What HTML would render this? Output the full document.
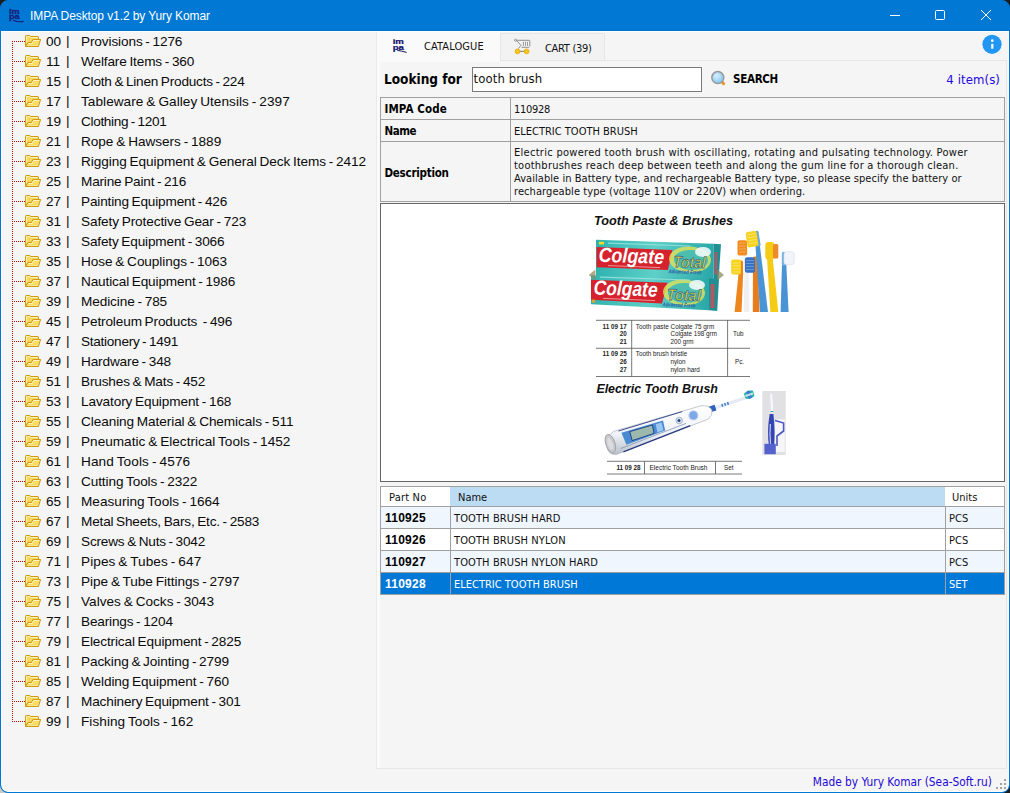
<!DOCTYPE html>
<html><head><meta charset="utf-8"><title>IMPA Desktop</title>
<style>
html,body{margin:0;padding:0;}
body{width:1010px;height:793px;overflow:hidden;background:#1c1c1c;font-family:"Liberation Sans",sans-serif;}
#win{position:absolute;left:0;top:0;width:1008px;height:791px;border:1px solid #0078d4;border-radius:8px;background:#0078d4;overflow:hidden;}
#content{position:absolute;left:0;top:30px;width:1008px;height:761px;background:#f5f5f5;border-radius:0 0 7px 7px;border-top:1px solid #fff;border-bottom:1px solid #fff;border-right:1px solid #fff;box-sizing:border-box;}
#title{position:absolute;left:-1px;top:-1px;width:1010px;height:31px;background:#0078d4;color:#fff;}
#title .t{position:absolute;left:30px;top:8px;font-size:12px;line-height:16px;white-space:nowrap;letter-spacing:-0.1px;}
.abs{position:absolute;}
#left{position:absolute;left:0;top:30px;width:375px;height:740px;border-left:1px solid #fff;border-top:1px solid #fff;}
.tr{position:absolute;left:-2px;height:20px;width:376px;white-space:nowrap;font-size:13.6px;line-height:20px;color:#0a0a0a;}
.tr .tb{position:absolute;left:66px;top:0px;}
.tr .fo{position:absolute;left:25px;top:4px;}
.tr .tc{position:absolute;left:46px;top:1px;}
.tr .tn{position:absolute;left:81px;top:1px;word-spacing:-0.9px;}
.tr:before{content:"";position:absolute;left:12px;top:10px;width:13px;height:1px;background:repeating-linear-gradient(90deg,#c80000 0 1px,transparent 1px 2px);}
#vline{position:absolute;left:10px;top:9px;width:1px;height:681px;background:repeating-linear-gradient(180deg,#c80000 0 1px,transparent 1px 2px);}
.dv{font-family:"DejaVu Sans Condensed","DejaVu Sans","Liberation Sans",sans-serif;}

#split{position:absolute;left:375px;top:31px;width:3px;height:737px;background:#fafafa;border-left:1px solid #ebebeb;}
#tabcart{left:499px;top:32px;width:103px;height:26px;background:#f2f2f2;border:1px solid #e6e6e6;border-bottom:none;}
#tabact{left:379px;top:31px;width:120px;height:30px;background:#fafafa;}
#tabpage{left:499px;top:59px;width:507px;height:1px;background:#e6e6e6;}
#det{left:379px;top:96px;width:623px;height:103px;border:1px solid #a0a0a0;}
.lb{left:3.5px;font-size:11.5px;line-height:16px;font-weight:bold;color:#000;letter-spacing:-0.25px;white-space:nowrap;}
.vl{left:133px;font-size:11px;line-height:16px;color:#111;white-space:nowrap;}
#pic{left:379px;top:202px;width:623px;height:277px;overflow:hidden;border:1px solid #666;background:#fff;}
#grid{left:380px;top:486px;width:623px;height:107px;border-left:1px solid #a0a0a0;border-top:1px solid #a0a0a0;border-right:1px solid #a0a0a0;border-bottom:1px solid #a0a0a0;margin:-1px 0 0 -1px;}
.hl{left:0;width:623px;height:1px;background:#a0a0a0;}
.gh{top:4px;font-size:11px;line-height:14px;color:#111;white-space:nowrap;}
.pn{left:4px;letter-spacing:0.25px;font-family:"Liberation Sans",sans-serif;font-weight:bold;font-size:12px;line-height:15px;color:#000;}
.gn{left:73px;font-size:11px;line-height:14px;color:#111;white-space:nowrap;}
.gu{left:568px;font-size:11px;line-height:14px;color:#111;}
</style></head><body>
<div style="position:absolute;left:0;top:783px;width:10px;height:10px;background:#c8c8c8"></div>
<div id="win">
 <div id="title">
  <svg class="abs" style="left:0;top:0" width="32" height="31" viewBox="0 0 32 31"><g font-family="Liberation Sans, sans-serif" font-weight="bold" font-size="6.8" fill="#16207a" stroke="#16207a" stroke-width="0.25"><text transform="translate(9,13.7) scale(1.35,1)">im</text><text transform="translate(9,18.6) scale(1.35,1)">pa</text></g><path d="M13 20.2Q17.5 22.4 23.5 21.4" stroke="#16207a" stroke-width="1.1" fill="none"/></svg>
  <div class="t">IMPA Desktop v1.2 by Yury Komar</div>
  <svg class="abs" style="left:888px;top:9px" width="14" height="12"><path d="M2 6.5H12" stroke="#fff" stroke-width="1"/></svg>
  <svg class="abs" style="left:934px;top:9px" width="12" height="12"><rect x="1.5" y="1.5" width="9" height="9" rx="1" fill="none" stroke="#fff" stroke-width="1"/></svg>
  <svg class="abs" style="left:980px;top:9px" width="12" height="12"><path d="M1 1L11 11M11 1L1 11" stroke="#fff" stroke-width="1"/></svg>
 </div>
 <div id="content"></div>
 <div id="left">
  <div id="vline"></div>
<div class="tr" style="top:-1px"><svg class="fo" width="17" height="13" viewBox="0 0 17 13"><path d="M0.5 11.5V1.2Q0.5 0.5 1.2 0.5H4.8L5.6 1.5H12.8Q13.5 1.5 13.5 2.2V4.5H8L6.5 7.5H3Z" fill="#f8d95e" stroke="#cf9a14" stroke-linejoin="round"/><path d="M1.5 8V1.5H4.5L5.3 2.5H12.5" fill="none" stroke="#fdf0b0" stroke-width="1"/><path d="M0.7 11.5L3 7.5H6.5L8 4.5H15.6L13.4 11.5Z" fill="#f9dc62" stroke="#cf9a14" stroke-linejoin="round"/><path d="M3.6 8.5H7.1L8.6 5.5H14.3" fill="none" stroke="#fff3bd" stroke-width="1"/><path d="M2.4 10.5H12.8" stroke="#fbe48a" stroke-width="1"/></svg><span class="tc">00</span><span class="tb">|</span><span class="tn" style="letter-spacing:-0.114px">Provisions - 1276</span></div>
<div class="tr" style="top:19px"><svg class="fo" width="17" height="13" viewBox="0 0 17 13"><path d="M0.5 11.5V1.2Q0.5 0.5 1.2 0.5H4.8L5.6 1.5H12.8Q13.5 1.5 13.5 2.2V4.5H8L6.5 7.5H3Z" fill="#f8d95e" stroke="#cf9a14" stroke-linejoin="round"/><path d="M1.5 8V1.5H4.5L5.3 2.5H12.5" fill="none" stroke="#fdf0b0" stroke-width="1"/><path d="M0.7 11.5L3 7.5H6.5L8 4.5H15.6L13.4 11.5Z" fill="#f9dc62" stroke="#cf9a14" stroke-linejoin="round"/><path d="M3.6 8.5H7.1L8.6 5.5H14.3" fill="none" stroke="#fff3bd" stroke-width="1"/><path d="M2.4 10.5H12.8" stroke="#fbe48a" stroke-width="1"/></svg><span class="tc">11</span><span class="tb">|</span><span class="tn" style="letter-spacing:-0.13px">Welfare Items - 360</span></div>
<div class="tr" style="top:39px"><svg class="fo" width="17" height="13" viewBox="0 0 17 13"><path d="M0.5 11.5V1.2Q0.5 0.5 1.2 0.5H4.8L5.6 1.5H12.8Q13.5 1.5 13.5 2.2V4.5H8L6.5 7.5H3Z" fill="#f8d95e" stroke="#cf9a14" stroke-linejoin="round"/><path d="M1.5 8V1.5H4.5L5.3 2.5H12.5" fill="none" stroke="#fdf0b0" stroke-width="1"/><path d="M0.7 11.5L3 7.5H6.5L8 4.5H15.6L13.4 11.5Z" fill="#f9dc62" stroke="#cf9a14" stroke-linejoin="round"/><path d="M3.6 8.5H7.1L8.6 5.5H14.3" fill="none" stroke="#fff3bd" stroke-width="1"/><path d="M2.4 10.5H12.8" stroke="#fbe48a" stroke-width="1"/></svg><span class="tc">15</span><span class="tb">|</span><span class="tn" style="letter-spacing:-0.204px">Cloth &amp; Linen Products - 224</span></div>
<div class="tr" style="top:59px"><svg class="fo" width="17" height="13" viewBox="0 0 17 13"><path d="M0.5 11.5V1.2Q0.5 0.5 1.2 0.5H4.8L5.6 1.5H12.8Q13.5 1.5 13.5 2.2V4.5H8L6.5 7.5H3Z" fill="#f8d95e" stroke="#cf9a14" stroke-linejoin="round"/><path d="M1.5 8V1.5H4.5L5.3 2.5H12.5" fill="none" stroke="#fdf0b0" stroke-width="1"/><path d="M0.7 11.5L3 7.5H6.5L8 4.5H15.6L13.4 11.5Z" fill="#f9dc62" stroke="#cf9a14" stroke-linejoin="round"/><path d="M3.6 8.5H7.1L8.6 5.5H14.3" fill="none" stroke="#fff3bd" stroke-width="1"/><path d="M2.4 10.5H12.8" stroke="#fbe48a" stroke-width="1"/></svg><span class="tc">17</span><span class="tb">|</span><span class="tn" style="letter-spacing:0.051px">Tableware &amp; Galley Utensils - 2397</span></div>
<div class="tr" style="top:79px"><svg class="fo" width="17" height="13" viewBox="0 0 17 13"><path d="M0.5 11.5V1.2Q0.5 0.5 1.2 0.5H4.8L5.6 1.5H12.8Q13.5 1.5 13.5 2.2V4.5H8L6.5 7.5H3Z" fill="#f8d95e" stroke="#cf9a14" stroke-linejoin="round"/><path d="M1.5 8V1.5H4.5L5.3 2.5H12.5" fill="none" stroke="#fdf0b0" stroke-width="1"/><path d="M0.7 11.5L3 7.5H6.5L8 4.5H15.6L13.4 11.5Z" fill="#f9dc62" stroke="#cf9a14" stroke-linejoin="round"/><path d="M3.6 8.5H7.1L8.6 5.5H14.3" fill="none" stroke="#fff3bd" stroke-width="1"/><path d="M2.4 10.5H12.8" stroke="#fbe48a" stroke-width="1"/></svg><span class="tc">19</span><span class="tb">|</span><span class="tn" style="letter-spacing:-0.327px">Clothing - 1201</span></div>
<div class="tr" style="top:99px"><svg class="fo" width="17" height="13" viewBox="0 0 17 13"><path d="M0.5 11.5V1.2Q0.5 0.5 1.2 0.5H4.8L5.6 1.5H12.8Q13.5 1.5 13.5 2.2V4.5H8L6.5 7.5H3Z" fill="#f8d95e" stroke="#cf9a14" stroke-linejoin="round"/><path d="M1.5 8V1.5H4.5L5.3 2.5H12.5" fill="none" stroke="#fdf0b0" stroke-width="1"/><path d="M0.7 11.5L3 7.5H6.5L8 4.5H15.6L13.4 11.5Z" fill="#f9dc62" stroke="#cf9a14" stroke-linejoin="round"/><path d="M3.6 8.5H7.1L8.6 5.5H14.3" fill="none" stroke="#fff3bd" stroke-width="1"/><path d="M2.4 10.5H12.8" stroke="#fbe48a" stroke-width="1"/></svg><span class="tc">21</span><span class="tb">|</span><span class="tn" style="letter-spacing:-0.025px">Rope &amp; Hawsers - 1889</span></div>
<div class="tr" style="top:119px"><svg class="fo" width="17" height="13" viewBox="0 0 17 13"><path d="M0.5 11.5V1.2Q0.5 0.5 1.2 0.5H4.8L5.6 1.5H12.8Q13.5 1.5 13.5 2.2V4.5H8L6.5 7.5H3Z" fill="#f8d95e" stroke="#cf9a14" stroke-linejoin="round"/><path d="M1.5 8V1.5H4.5L5.3 2.5H12.5" fill="none" stroke="#fdf0b0" stroke-width="1"/><path d="M0.7 11.5L3 7.5H6.5L8 4.5H15.6L13.4 11.5Z" fill="#f9dc62" stroke="#cf9a14" stroke-linejoin="round"/><path d="M3.6 8.5H7.1L8.6 5.5H14.3" fill="none" stroke="#fff3bd" stroke-width="1"/><path d="M2.4 10.5H12.8" stroke="#fbe48a" stroke-width="1"/></svg><span class="tc">23</span><span class="tb">|</span><span class="tn" style="letter-spacing:-0.056px">Rigging Equipment &amp; General Deck Items - 2412</span></div>
<div class="tr" style="top:139px"><svg class="fo" width="17" height="13" viewBox="0 0 17 13"><path d="M0.5 11.5V1.2Q0.5 0.5 1.2 0.5H4.8L5.6 1.5H12.8Q13.5 1.5 13.5 2.2V4.5H8L6.5 7.5H3Z" fill="#f8d95e" stroke="#cf9a14" stroke-linejoin="round"/><path d="M1.5 8V1.5H4.5L5.3 2.5H12.5" fill="none" stroke="#fdf0b0" stroke-width="1"/><path d="M0.7 11.5L3 7.5H6.5L8 4.5H15.6L13.4 11.5Z" fill="#f9dc62" stroke="#cf9a14" stroke-linejoin="round"/><path d="M3.6 8.5H7.1L8.6 5.5H14.3" fill="none" stroke="#fff3bd" stroke-width="1"/><path d="M2.4 10.5H12.8" stroke="#fbe48a" stroke-width="1"/></svg><span class="tc">25</span><span class="tb">|</span><span class="tn" style="letter-spacing:-0.182px">Marine Paint - 216</span></div>
<div class="tr" style="top:159px"><svg class="fo" width="17" height="13" viewBox="0 0 17 13"><path d="M0.5 11.5V1.2Q0.5 0.5 1.2 0.5H4.8L5.6 1.5H12.8Q13.5 1.5 13.5 2.2V4.5H8L6.5 7.5H3Z" fill="#f8d95e" stroke="#cf9a14" stroke-linejoin="round"/><path d="M1.5 8V1.5H4.5L5.3 2.5H12.5" fill="none" stroke="#fdf0b0" stroke-width="1"/><path d="M0.7 11.5L3 7.5H6.5L8 4.5H15.6L13.4 11.5Z" fill="#f9dc62" stroke="#cf9a14" stroke-linejoin="round"/><path d="M3.6 8.5H7.1L8.6 5.5H14.3" fill="none" stroke="#fff3bd" stroke-width="1"/><path d="M2.4 10.5H12.8" stroke="#fbe48a" stroke-width="1"/></svg><span class="tc">27</span><span class="tb">|</span><span class="tn" style="letter-spacing:-0.161px">Painting Equipment - 426</span></div>
<div class="tr" style="top:179px"><svg class="fo" width="17" height="13" viewBox="0 0 17 13"><path d="M0.5 11.5V1.2Q0.5 0.5 1.2 0.5H4.8L5.6 1.5H12.8Q13.5 1.5 13.5 2.2V4.5H8L6.5 7.5H3Z" fill="#f8d95e" stroke="#cf9a14" stroke-linejoin="round"/><path d="M1.5 8V1.5H4.5L5.3 2.5H12.5" fill="none" stroke="#fdf0b0" stroke-width="1"/><path d="M0.7 11.5L3 7.5H6.5L8 4.5H15.6L13.4 11.5Z" fill="#f9dc62" stroke="#cf9a14" stroke-linejoin="round"/><path d="M3.6 8.5H7.1L8.6 5.5H14.3" fill="none" stroke="#fff3bd" stroke-width="1"/><path d="M2.4 10.5H12.8" stroke="#fbe48a" stroke-width="1"/></svg><span class="tc">31</span><span class="tb">|</span><span class="tn" style="letter-spacing:-0.101px">Safety Protective Gear - 723</span></div>
<div class="tr" style="top:199px"><svg class="fo" width="17" height="13" viewBox="0 0 17 13"><path d="M0.5 11.5V1.2Q0.5 0.5 1.2 0.5H4.8L5.6 1.5H12.8Q13.5 1.5 13.5 2.2V4.5H8L6.5 7.5H3Z" fill="#f8d95e" stroke="#cf9a14" stroke-linejoin="round"/><path d="M1.5 8V1.5H4.5L5.3 2.5H12.5" fill="none" stroke="#fdf0b0" stroke-width="1"/><path d="M0.7 11.5L3 7.5H6.5L8 4.5H15.6L13.4 11.5Z" fill="#f9dc62" stroke="#cf9a14" stroke-linejoin="round"/><path d="M3.6 8.5H7.1L8.6 5.5H14.3" fill="none" stroke="#fff3bd" stroke-width="1"/><path d="M2.4 10.5H12.8" stroke="#fbe48a" stroke-width="1"/></svg><span class="tc">33</span><span class="tb">|</span><span class="tn" style="letter-spacing:-0.154px">Safety Equipment - 3066</span></div>
<div class="tr" style="top:219px"><svg class="fo" width="17" height="13" viewBox="0 0 17 13"><path d="M0.5 11.5V1.2Q0.5 0.5 1.2 0.5H4.8L5.6 1.5H12.8Q13.5 1.5 13.5 2.2V4.5H8L6.5 7.5H3Z" fill="#f8d95e" stroke="#cf9a14" stroke-linejoin="round"/><path d="M1.5 8V1.5H4.5L5.3 2.5H12.5" fill="none" stroke="#fdf0b0" stroke-width="1"/><path d="M0.7 11.5L3 7.5H6.5L8 4.5H15.6L13.4 11.5Z" fill="#f9dc62" stroke="#cf9a14" stroke-linejoin="round"/><path d="M3.6 8.5H7.1L8.6 5.5H14.3" fill="none" stroke="#fff3bd" stroke-width="1"/><path d="M2.4 10.5H12.8" stroke="#fbe48a" stroke-width="1"/></svg><span class="tc">35</span><span class="tb">|</span><span class="tn" style="letter-spacing:-0.062px">Hose &amp; Couplings - 1063</span></div>
<div class="tr" style="top:239px"><svg class="fo" width="17" height="13" viewBox="0 0 17 13"><path d="M0.5 11.5V1.2Q0.5 0.5 1.2 0.5H4.8L5.6 1.5H12.8Q13.5 1.5 13.5 2.2V4.5H8L6.5 7.5H3Z" fill="#f8d95e" stroke="#cf9a14" stroke-linejoin="round"/><path d="M1.5 8V1.5H4.5L5.3 2.5H12.5" fill="none" stroke="#fdf0b0" stroke-width="1"/><path d="M0.7 11.5L3 7.5H6.5L8 4.5H15.6L13.4 11.5Z" fill="#f9dc62" stroke="#cf9a14" stroke-linejoin="round"/><path d="M3.6 8.5H7.1L8.6 5.5H14.3" fill="none" stroke="#fff3bd" stroke-width="1"/><path d="M2.4 10.5H12.8" stroke="#fbe48a" stroke-width="1"/></svg><span class="tc">37</span><span class="tb">|</span><span class="tn" style="letter-spacing:-0.136px">Nautical Equipment - 1986</span></div>
<div class="tr" style="top:259px"><svg class="fo" width="17" height="13" viewBox="0 0 17 13"><path d="M0.5 11.5V1.2Q0.5 0.5 1.2 0.5H4.8L5.6 1.5H12.8Q13.5 1.5 13.5 2.2V4.5H8L6.5 7.5H3Z" fill="#f8d95e" stroke="#cf9a14" stroke-linejoin="round"/><path d="M1.5 8V1.5H4.5L5.3 2.5H12.5" fill="none" stroke="#fdf0b0" stroke-width="1"/><path d="M0.7 11.5L3 7.5H6.5L8 4.5H15.6L13.4 11.5Z" fill="#f9dc62" stroke="#cf9a14" stroke-linejoin="round"/><path d="M3.6 8.5H7.1L8.6 5.5H14.3" fill="none" stroke="#fff3bd" stroke-width="1"/><path d="M2.4 10.5H12.8" stroke="#fbe48a" stroke-width="1"/></svg><span class="tc">39</span><span class="tb">|</span><span class="tn" style="letter-spacing:-0.091px">Medicine - 785</span></div>
<div class="tr" style="top:279px"><svg class="fo" width="17" height="13" viewBox="0 0 17 13"><path d="M0.5 11.5V1.2Q0.5 0.5 1.2 0.5H4.8L5.6 1.5H12.8Q13.5 1.5 13.5 2.2V4.5H8L6.5 7.5H3Z" fill="#f8d95e" stroke="#cf9a14" stroke-linejoin="round"/><path d="M1.5 8V1.5H4.5L5.3 2.5H12.5" fill="none" stroke="#fdf0b0" stroke-width="1"/><path d="M0.7 11.5L3 7.5H6.5L8 4.5H15.6L13.4 11.5Z" fill="#f9dc62" stroke="#cf9a14" stroke-linejoin="round"/><path d="M3.6 8.5H7.1L8.6 5.5H14.3" fill="none" stroke="#fff3bd" stroke-width="1"/><path d="M2.4 10.5H12.8" stroke="#fbe48a" stroke-width="1"/></svg><span class="tc">45</span><span class="tb">|</span><span class="tn" style="letter-spacing:-0.125px">Petroleum Products&nbsp; - 496</span></div>
<div class="tr" style="top:299px"><svg class="fo" width="17" height="13" viewBox="0 0 17 13"><path d="M0.5 11.5V1.2Q0.5 0.5 1.2 0.5H4.8L5.6 1.5H12.8Q13.5 1.5 13.5 2.2V4.5H8L6.5 7.5H3Z" fill="#f8d95e" stroke="#cf9a14" stroke-linejoin="round"/><path d="M1.5 8V1.5H4.5L5.3 2.5H12.5" fill="none" stroke="#fdf0b0" stroke-width="1"/><path d="M0.7 11.5L3 7.5H6.5L8 4.5H15.6L13.4 11.5Z" fill="#f9dc62" stroke="#cf9a14" stroke-linejoin="round"/><path d="M3.6 8.5H7.1L8.6 5.5H14.3" fill="none" stroke="#fff3bd" stroke-width="1"/><path d="M2.4 10.5H12.8" stroke="#fbe48a" stroke-width="1"/></svg><span class="tc">47</span><span class="tb">|</span><span class="tn" style="letter-spacing:-0.273px">Stationery - 1491</span></div>
<div class="tr" style="top:319px"><svg class="fo" width="17" height="13" viewBox="0 0 17 13"><path d="M0.5 11.5V1.2Q0.5 0.5 1.2 0.5H4.8L5.6 1.5H12.8Q13.5 1.5 13.5 2.2V4.5H8L6.5 7.5H3Z" fill="#f8d95e" stroke="#cf9a14" stroke-linejoin="round"/><path d="M1.5 8V1.5H4.5L5.3 2.5H12.5" fill="none" stroke="#fdf0b0" stroke-width="1"/><path d="M0.7 11.5L3 7.5H6.5L8 4.5H15.6L13.4 11.5Z" fill="#f9dc62" stroke="#cf9a14" stroke-linejoin="round"/><path d="M3.6 8.5H7.1L8.6 5.5H14.3" fill="none" stroke="#fff3bd" stroke-width="1"/><path d="M2.4 10.5H12.8" stroke="#fbe48a" stroke-width="1"/></svg><span class="tc">49</span><span class="tb">|</span><span class="tn" style="letter-spacing:-0.135px">Hardware - 348</span></div>
<div class="tr" style="top:339px"><svg class="fo" width="17" height="13" viewBox="0 0 17 13"><path d="M0.5 11.5V1.2Q0.5 0.5 1.2 0.5H4.8L5.6 1.5H12.8Q13.5 1.5 13.5 2.2V4.5H8L6.5 7.5H3Z" fill="#f8d95e" stroke="#cf9a14" stroke-linejoin="round"/><path d="M1.5 8V1.5H4.5L5.3 2.5H12.5" fill="none" stroke="#fdf0b0" stroke-width="1"/><path d="M0.7 11.5L3 7.5H6.5L8 4.5H15.6L13.4 11.5Z" fill="#f9dc62" stroke="#cf9a14" stroke-linejoin="round"/><path d="M3.6 8.5H7.1L8.6 5.5H14.3" fill="none" stroke="#fff3bd" stroke-width="1"/><path d="M2.4 10.5H12.8" stroke="#fbe48a" stroke-width="1"/></svg><span class="tc">51</span><span class="tb">|</span><span class="tn" style="letter-spacing:-0.15px">Brushes &amp; Mats - 452</span></div>
<div class="tr" style="top:359px"><svg class="fo" width="17" height="13" viewBox="0 0 17 13"><path d="M0.5 11.5V1.2Q0.5 0.5 1.2 0.5H4.8L5.6 1.5H12.8Q13.5 1.5 13.5 2.2V4.5H8L6.5 7.5H3Z" fill="#f8d95e" stroke="#cf9a14" stroke-linejoin="round"/><path d="M1.5 8V1.5H4.5L5.3 2.5H12.5" fill="none" stroke="#fdf0b0" stroke-width="1"/><path d="M0.7 11.5L3 7.5H6.5L8 4.5H15.6L13.4 11.5Z" fill="#f9dc62" stroke="#cf9a14" stroke-linejoin="round"/><path d="M3.6 8.5H7.1L8.6 5.5H14.3" fill="none" stroke="#fff3bd" stroke-width="1"/><path d="M2.4 10.5H12.8" stroke="#fbe48a" stroke-width="1"/></svg><span class="tc">53</span><span class="tb">|</span><span class="tn" style="letter-spacing:-0.111px">Lavatory Equipment - 168</span></div>
<div class="tr" style="top:379px"><svg class="fo" width="17" height="13" viewBox="0 0 17 13"><path d="M0.5 11.5V1.2Q0.5 0.5 1.2 0.5H4.8L5.6 1.5H12.8Q13.5 1.5 13.5 2.2V4.5H8L6.5 7.5H3Z" fill="#f8d95e" stroke="#cf9a14" stroke-linejoin="round"/><path d="M1.5 8V1.5H4.5L5.3 2.5H12.5" fill="none" stroke="#fdf0b0" stroke-width="1"/><path d="M0.7 11.5L3 7.5H6.5L8 4.5H15.6L13.4 11.5Z" fill="#f9dc62" stroke="#cf9a14" stroke-linejoin="round"/><path d="M3.6 8.5H7.1L8.6 5.5H14.3" fill="none" stroke="#fff3bd" stroke-width="1"/><path d="M2.4 10.5H12.8" stroke="#fbe48a" stroke-width="1"/></svg><span class="tc">55</span><span class="tb">|</span><span class="tn" style="letter-spacing:-0.078px">Cleaning Material &amp; Chemicals - 511</span></div>
<div class="tr" style="top:399px"><svg class="fo" width="17" height="13" viewBox="0 0 17 13"><path d="M0.5 11.5V1.2Q0.5 0.5 1.2 0.5H4.8L5.6 1.5H12.8Q13.5 1.5 13.5 2.2V4.5H8L6.5 7.5H3Z" fill="#f8d95e" stroke="#cf9a14" stroke-linejoin="round"/><path d="M1.5 8V1.5H4.5L5.3 2.5H12.5" fill="none" stroke="#fdf0b0" stroke-width="1"/><path d="M0.7 11.5L3 7.5H6.5L8 4.5H15.6L13.4 11.5Z" fill="#f9dc62" stroke="#cf9a14" stroke-linejoin="round"/><path d="M3.6 8.5H7.1L8.6 5.5H14.3" fill="none" stroke="#fff3bd" stroke-width="1"/><path d="M2.4 10.5H12.8" stroke="#fbe48a" stroke-width="1"/></svg><span class="tc">59</span><span class="tb">|</span><span class="tn" style="letter-spacing:0.009px">Pneumatic &amp; Electrical Tools - 1452</span></div>
<div class="tr" style="top:419px"><svg class="fo" width="17" height="13" viewBox="0 0 17 13"><path d="M0.5 11.5V1.2Q0.5 0.5 1.2 0.5H4.8L5.6 1.5H12.8Q13.5 1.5 13.5 2.2V4.5H8L6.5 7.5H3Z" fill="#f8d95e" stroke="#cf9a14" stroke-linejoin="round"/><path d="M1.5 8V1.5H4.5L5.3 2.5H12.5" fill="none" stroke="#fdf0b0" stroke-width="1"/><path d="M0.7 11.5L3 7.5H6.5L8 4.5H15.6L13.4 11.5Z" fill="#f9dc62" stroke="#cf9a14" stroke-linejoin="round"/><path d="M3.6 8.5H7.1L8.6 5.5H14.3" fill="none" stroke="#fff3bd" stroke-width="1"/><path d="M2.4 10.5H12.8" stroke="#fbe48a" stroke-width="1"/></svg><span class="tc">61</span><span class="tb">|</span><span class="tn" style="letter-spacing:0.112px">Hand Tools - 4576</span></div>
<div class="tr" style="top:439px"><svg class="fo" width="17" height="13" viewBox="0 0 17 13"><path d="M0.5 11.5V1.2Q0.5 0.5 1.2 0.5H4.8L5.6 1.5H12.8Q13.5 1.5 13.5 2.2V4.5H8L6.5 7.5H3Z" fill="#f8d95e" stroke="#cf9a14" stroke-linejoin="round"/><path d="M1.5 8V1.5H4.5L5.3 2.5H12.5" fill="none" stroke="#fdf0b0" stroke-width="1"/><path d="M0.7 11.5L3 7.5H6.5L8 4.5H15.6L13.4 11.5Z" fill="#f9dc62" stroke="#cf9a14" stroke-linejoin="round"/><path d="M3.6 8.5H7.1L8.6 5.5H14.3" fill="none" stroke="#fff3bd" stroke-width="1"/><path d="M2.4 10.5H12.8" stroke="#fbe48a" stroke-width="1"/></svg><span class="tc">63</span><span class="tb">|</span><span class="tn" style="letter-spacing:-0.093px">Cutting Tools - 2322</span></div>
<div class="tr" style="top:459px"><svg class="fo" width="17" height="13" viewBox="0 0 17 13"><path d="M0.5 11.5V1.2Q0.5 0.5 1.2 0.5H4.8L5.6 1.5H12.8Q13.5 1.5 13.5 2.2V4.5H8L6.5 7.5H3Z" fill="#f8d95e" stroke="#cf9a14" stroke-linejoin="round"/><path d="M1.5 8V1.5H4.5L5.3 2.5H12.5" fill="none" stroke="#fdf0b0" stroke-width="1"/><path d="M0.7 11.5L3 7.5H6.5L8 4.5H15.6L13.4 11.5Z" fill="#f9dc62" stroke="#cf9a14" stroke-linejoin="round"/><path d="M3.6 8.5H7.1L8.6 5.5H14.3" fill="none" stroke="#fff3bd" stroke-width="1"/><path d="M2.4 10.5H12.8" stroke="#fbe48a" stroke-width="1"/></svg><span class="tc">65</span><span class="tb">|</span><span class="tn" style="letter-spacing:0.015px">Measuring Tools - 1664</span></div>
<div class="tr" style="top:479px"><svg class="fo" width="17" height="13" viewBox="0 0 17 13"><path d="M0.5 11.5V1.2Q0.5 0.5 1.2 0.5H4.8L5.6 1.5H12.8Q13.5 1.5 13.5 2.2V4.5H8L6.5 7.5H3Z" fill="#f8d95e" stroke="#cf9a14" stroke-linejoin="round"/><path d="M1.5 8V1.5H4.5L5.3 2.5H12.5" fill="none" stroke="#fdf0b0" stroke-width="1"/><path d="M0.7 11.5L3 7.5H6.5L8 4.5H15.6L13.4 11.5Z" fill="#f9dc62" stroke="#cf9a14" stroke-linejoin="round"/><path d="M3.6 8.5H7.1L8.6 5.5H14.3" fill="none" stroke="#fff3bd" stroke-width="1"/><path d="M2.4 10.5H12.8" stroke="#fbe48a" stroke-width="1"/></svg><span class="tc">67</span><span class="tb">|</span><span class="tn" style="letter-spacing:-0.176px">Metal Sheets, Bars, Etc. - 2583</span></div>
<div class="tr" style="top:499px"><svg class="fo" width="17" height="13" viewBox="0 0 17 13"><path d="M0.5 11.5V1.2Q0.5 0.5 1.2 0.5H4.8L5.6 1.5H12.8Q13.5 1.5 13.5 2.2V4.5H8L6.5 7.5H3Z" fill="#f8d95e" stroke="#cf9a14" stroke-linejoin="round"/><path d="M1.5 8V1.5H4.5L5.3 2.5H12.5" fill="none" stroke="#fdf0b0" stroke-width="1"/><path d="M0.7 11.5L3 7.5H6.5L8 4.5H15.6L13.4 11.5Z" fill="#f9dc62" stroke="#cf9a14" stroke-linejoin="round"/><path d="M3.6 8.5H7.1L8.6 5.5H14.3" fill="none" stroke="#fff3bd" stroke-width="1"/><path d="M2.4 10.5H12.8" stroke="#fbe48a" stroke-width="1"/></svg><span class="tc">69</span><span class="tb">|</span><span class="tn" style="letter-spacing:-0.188px">Screws &amp; Nuts - 3042</span></div>
<div class="tr" style="top:519px"><svg class="fo" width="17" height="13" viewBox="0 0 17 13"><path d="M0.5 11.5V1.2Q0.5 0.5 1.2 0.5H4.8L5.6 1.5H12.8Q13.5 1.5 13.5 2.2V4.5H8L6.5 7.5H3Z" fill="#f8d95e" stroke="#cf9a14" stroke-linejoin="round"/><path d="M1.5 8V1.5H4.5L5.3 2.5H12.5" fill="none" stroke="#fdf0b0" stroke-width="1"/><path d="M0.7 11.5L3 7.5H6.5L8 4.5H15.6L13.4 11.5Z" fill="#f9dc62" stroke="#cf9a14" stroke-linejoin="round"/><path d="M3.6 8.5H7.1L8.6 5.5H14.3" fill="none" stroke="#fff3bd" stroke-width="1"/><path d="M2.4 10.5H12.8" stroke="#fbe48a" stroke-width="1"/></svg><span class="tc">71</span><span class="tb">|</span><span class="tn" style="letter-spacing:0.077px">Pipes &amp; Tubes - 647</span></div>
<div class="tr" style="top:539px"><svg class="fo" width="17" height="13" viewBox="0 0 17 13"><path d="M0.5 11.5V1.2Q0.5 0.5 1.2 0.5H4.8L5.6 1.5H12.8Q13.5 1.5 13.5 2.2V4.5H8L6.5 7.5H3Z" fill="#f8d95e" stroke="#cf9a14" stroke-linejoin="round"/><path d="M1.5 8V1.5H4.5L5.3 2.5H12.5" fill="none" stroke="#fdf0b0" stroke-width="1"/><path d="M0.7 11.5L3 7.5H6.5L8 4.5H15.6L13.4 11.5Z" fill="#f9dc62" stroke="#cf9a14" stroke-linejoin="round"/><path d="M3.6 8.5H7.1L8.6 5.5H14.3" fill="none" stroke="#fff3bd" stroke-width="1"/><path d="M2.4 10.5H12.8" stroke="#fbe48a" stroke-width="1"/></svg><span class="tc">73</span><span class="tb">|</span><span class="tn" style="letter-spacing:-0.033px">Pipe &amp; Tube Fittings - 2797</span></div>
<div class="tr" style="top:559px"><svg class="fo" width="17" height="13" viewBox="0 0 17 13"><path d="M0.5 11.5V1.2Q0.5 0.5 1.2 0.5H4.8L5.6 1.5H12.8Q13.5 1.5 13.5 2.2V4.5H8L6.5 7.5H3Z" fill="#f8d95e" stroke="#cf9a14" stroke-linejoin="round"/><path d="M1.5 8V1.5H4.5L5.3 2.5H12.5" fill="none" stroke="#fdf0b0" stroke-width="1"/><path d="M0.7 11.5L3 7.5H6.5L8 4.5H15.6L13.4 11.5Z" fill="#f9dc62" stroke="#cf9a14" stroke-linejoin="round"/><path d="M3.6 8.5H7.1L8.6 5.5H14.3" fill="none" stroke="#fff3bd" stroke-width="1"/><path d="M2.4 10.5H12.8" stroke="#fbe48a" stroke-width="1"/></svg><span class="tc">75</span><span class="tb">|</span><span class="tn" style="letter-spacing:0.004px">Valves &amp; Cocks - 3043</span></div>
<div class="tr" style="top:579px"><svg class="fo" width="17" height="13" viewBox="0 0 17 13"><path d="M0.5 11.5V1.2Q0.5 0.5 1.2 0.5H4.8L5.6 1.5H12.8Q13.5 1.5 13.5 2.2V4.5H8L6.5 7.5H3Z" fill="#f8d95e" stroke="#cf9a14" stroke-linejoin="round"/><path d="M1.5 8V1.5H4.5L5.3 2.5H12.5" fill="none" stroke="#fdf0b0" stroke-width="1"/><path d="M0.7 11.5L3 7.5H6.5L8 4.5H15.6L13.4 11.5Z" fill="#f9dc62" stroke="#cf9a14" stroke-linejoin="round"/><path d="M3.6 8.5H7.1L8.6 5.5H14.3" fill="none" stroke="#fff3bd" stroke-width="1"/><path d="M2.4 10.5H12.8" stroke="#fbe48a" stroke-width="1"/></svg><span class="tc">77</span><span class="tb">|</span><span class="tn" style="letter-spacing:-0.159px">Bearings - 1204</span></div>
<div class="tr" style="top:599px"><svg class="fo" width="17" height="13" viewBox="0 0 17 13"><path d="M0.5 11.5V1.2Q0.5 0.5 1.2 0.5H4.8L5.6 1.5H12.8Q13.5 1.5 13.5 2.2V4.5H8L6.5 7.5H3Z" fill="#f8d95e" stroke="#cf9a14" stroke-linejoin="round"/><path d="M1.5 8V1.5H4.5L5.3 2.5H12.5" fill="none" stroke="#fdf0b0" stroke-width="1"/><path d="M0.7 11.5L3 7.5H6.5L8 4.5H15.6L13.4 11.5Z" fill="#f9dc62" stroke="#cf9a14" stroke-linejoin="round"/><path d="M3.6 8.5H7.1L8.6 5.5H14.3" fill="none" stroke="#fff3bd" stroke-width="1"/><path d="M2.4 10.5H12.8" stroke="#fbe48a" stroke-width="1"/></svg><span class="tc">79</span><span class="tb">|</span><span class="tn" style="letter-spacing:-0.128px">Electrical Equipment - 2825</span></div>
<div class="tr" style="top:619px"><svg class="fo" width="17" height="13" viewBox="0 0 17 13"><path d="M0.5 11.5V1.2Q0.5 0.5 1.2 0.5H4.8L5.6 1.5H12.8Q13.5 1.5 13.5 2.2V4.5H8L6.5 7.5H3Z" fill="#f8d95e" stroke="#cf9a14" stroke-linejoin="round"/><path d="M1.5 8V1.5H4.5L5.3 2.5H12.5" fill="none" stroke="#fdf0b0" stroke-width="1"/><path d="M0.7 11.5L3 7.5H6.5L8 4.5H15.6L13.4 11.5Z" fill="#f9dc62" stroke="#cf9a14" stroke-linejoin="round"/><path d="M3.6 8.5H7.1L8.6 5.5H14.3" fill="none" stroke="#fff3bd" stroke-width="1"/><path d="M2.4 10.5H12.8" stroke="#fbe48a" stroke-width="1"/></svg><span class="tc">81</span><span class="tb">|</span><span class="tn" style="letter-spacing:-0.106px">Packing &amp; Jointing - 2799</span></div>
<div class="tr" style="top:639px"><svg class="fo" width="17" height="13" viewBox="0 0 17 13"><path d="M0.5 11.5V1.2Q0.5 0.5 1.2 0.5H4.8L5.6 1.5H12.8Q13.5 1.5 13.5 2.2V4.5H8L6.5 7.5H3Z" fill="#f8d95e" stroke="#cf9a14" stroke-linejoin="round"/><path d="M1.5 8V1.5H4.5L5.3 2.5H12.5" fill="none" stroke="#fdf0b0" stroke-width="1"/><path d="M0.7 11.5L3 7.5H6.5L8 4.5H15.6L13.4 11.5Z" fill="#f9dc62" stroke="#cf9a14" stroke-linejoin="round"/><path d="M3.6 8.5H7.1L8.6 5.5H14.3" fill="none" stroke="#fff3bd" stroke-width="1"/><path d="M2.4 10.5H12.8" stroke="#fbe48a" stroke-width="1"/></svg><span class="tc">85</span><span class="tb">|</span><span class="tn" style="letter-spacing:-0.078px">Welding Equipment - 760</span></div>
<div class="tr" style="top:659px"><svg class="fo" width="17" height="13" viewBox="0 0 17 13"><path d="M0.5 11.5V1.2Q0.5 0.5 1.2 0.5H4.8L5.6 1.5H12.8Q13.5 1.5 13.5 2.2V4.5H8L6.5 7.5H3Z" fill="#f8d95e" stroke="#cf9a14" stroke-linejoin="round"/><path d="M1.5 8V1.5H4.5L5.3 2.5H12.5" fill="none" stroke="#fdf0b0" stroke-width="1"/><path d="M0.7 11.5L3 7.5H6.5L8 4.5H15.6L13.4 11.5Z" fill="#f9dc62" stroke="#cf9a14" stroke-linejoin="round"/><path d="M3.6 8.5H7.1L8.6 5.5H14.3" fill="none" stroke="#fff3bd" stroke-width="1"/><path d="M2.4 10.5H12.8" stroke="#fbe48a" stroke-width="1"/></svg><span class="tc">87</span><span class="tb">|</span><span class="tn" style="letter-spacing:-0.15px">Machinery Equipment - 301</span></div>
<div class="tr" style="top:679px"><svg class="fo" width="17" height="13" viewBox="0 0 17 13"><path d="M0.5 11.5V1.2Q0.5 0.5 1.2 0.5H4.8L5.6 1.5H12.8Q13.5 1.5 13.5 2.2V4.5H8L6.5 7.5H3Z" fill="#f8d95e" stroke="#cf9a14" stroke-linejoin="round"/><path d="M1.5 8V1.5H4.5L5.3 2.5H12.5" fill="none" stroke="#fdf0b0" stroke-width="1"/><path d="M0.7 11.5L3 7.5H6.5L8 4.5H15.6L13.4 11.5Z" fill="#f9dc62" stroke="#cf9a14" stroke-linejoin="round"/><path d="M3.6 8.5H7.1L8.6 5.5H14.3" fill="none" stroke="#fff3bd" stroke-width="1"/><path d="M2.4 10.5H12.8" stroke="#fbe48a" stroke-width="1"/></svg><span class="tc">99</span><span class="tb">|</span><span class="tn" style="letter-spacing:0.06px">Fishing Tools - 162</span></div>
 </div>
 <div id="split"></div>
 <!-- tabs -->
 <div class="abs" id="tabact"></div>
 <div class="abs" id="tabcart"></div>
 <div class="abs" style="left:1005px;top:59px;width:1px;height:709px;background:#e6e6e6"></div>
 <div class="abs" id="tabpage"></div>
 <svg class="abs" style="left:383px;top:31px" width="32" height="31" viewBox="384 32 32 31"><g font-family="Liberation Sans, sans-serif" font-weight="bold" font-size="7.4" fill="#10106a" stroke="#10106a" stroke-width="0.2"><text transform="translate(392.7,43.9) scale(1.3,1)">im</text><text transform="translate(392.7,49.6) scale(1.3,1)">pa</text></g><path d="M397.3 50.4Q401 50.8 406.6 52.4" stroke="#10106a" stroke-width="1" fill="none"/></svg>
 <div class="abs dv" style="left:423px;top:39px;font-size:11px;line-height:14px;color:#111;letter-spacing:0.1px">CATALOGUE</div>
 <svg class="abs" style="left:512px;top:37px" width="20" height="18" viewBox="0 0 20 18"><g fill="none" stroke="#8e8e8e" stroke-width="1"><path d="M1.2 2.2L2.6 1.2L4.2 2.3L2.8 3.3Z"/><path d="M3.6 2.6L8 7.4L5.4 10.6"/><path d="M4.4 2.3H16.2Q16.8 2.3 16.8 2.9V8.4"/><path d="M8.6 9.3H16.2"/><path d="M10.4 3.8V7.9M12.5 3.8V7.9M14.5 3.8V7.9" stroke-width="0.9"/><path d="M6 13.4H12.5" stroke-width="1.3"/></g><circle cx="4.5" cy="13.4" r="2.4" fill="#f7c71e" stroke="#eaa800" stroke-width="0.8"/><circle cx="13.6" cy="13.4" r="2.4" fill="#f7c71e" stroke="#eaa800" stroke-width="0.8"/></svg>
 <div class="abs dv" style="left:544px;top:41px;font-size:11px;line-height:14px;color:#111;letter-spacing:-0.3px">CART (39)</div>
 <svg class="abs" style="left:979.7px;top:32.4px" width="22" height="22" viewBox="0 0 22 22"><circle cx="11" cy="11.3" r="9.6" fill="#2196f3"/><rect x="10.2" y="10.8" width="2.2" height="4.9" fill="#fff"/><circle cx="11.3" cy="7.7" r="1.35" fill="#fff"/></svg>
 <!-- search row -->
 <div class="abs dv" style="left:383px;top:69px;font-size:13.5px;line-height:18px;font-weight:bold;color:#000">Looking for</div>
 <div class="abs" style="left:471px;top:66px;width:228px;height:23px;border:1px solid #7a7a7a;background:#fff"></div>
 <div class="abs dv" style="left:472.6px;top:69px;font-size:13px;line-height:17px;color:#111;letter-spacing:0.08px">tooth brush</div>
 <svg class="abs" style="left:708px;top:67px" width="20" height="20" viewBox="0 0 20 20"><defs><radialGradient id="lens" cx="0.4" cy="0.35" r="0.8"><stop offset="0" stop-color="#d8f0ff"/><stop offset="1" stop-color="#6fbdf0"/></radialGradient></defs><path d="M13 14L14.6 15.6" stroke="#e89a20" stroke-width="3" stroke-linecap="round"/><circle cx="8.8" cy="9.6" r="6" fill="url(#lens)" stroke="#9a9a9a" stroke-width="1.5"/></svg>
 <div class="abs dv" style="left:732px;top:70px;font-size:11.5px;line-height:16px;font-weight:bold;color:#000;letter-spacing:-0.3px">SEARCH</div>
 <div class="abs dv" style="left:899px;width:100px;text-align:right;top:70px;font-size:13px;line-height:17px;color:#2408e0;letter-spacing:0.1px">4 item(s)</div>
 <!-- details -->
 <div class="abs" id="det">
  <div class="abs" style="left:129px;top:0;width:1px;height:103px;background:#a0a0a0"></div>
  <div class="abs" style="left:0;top:21px;width:623px;height:1px;background:#a0a0a0"></div>
  <div class="abs" style="left:0;top:43px;width:623px;height:1px;background:#a0a0a0"></div>
  <div class="abs dv lb" style="top:3.3px;letter-spacing:0.1px">IMPA Code</div>
  <div class="abs dv lb" style="top:25.4px;letter-spacing:-0.5px">Name</div>
  <div class="abs dv lb" style="top:66.5px">Description</div>
  <div class="abs dv vl" style="top:3.5px;letter-spacing:-0.3px">110928</div>
  <div class="abs dv vl" style="top:25.6px">ELECTRIC TOOTH BRUSH</div>
  <div class="abs dv vl" style="top:48px;line-height:13px"><span style="letter-spacing:0.286px">Electric powered tooth brush with oscillating, rotating and pulsating technology. Power</span><br><span style="letter-spacing:0.245px">toothbrushes reach deep between teeth and along the gum line for a thorough clean.</span><br><span style="letter-spacing:0.051px">Available in Battery type, and rechargeable Battery type, so please specify the battery or</span><br><span style="letter-spacing:0.08px">rechargeable type (voltage 110V or 220V) when ordering.</span></div>
 </div>
 <!-- picture -->
 <div class="abs" id="pic">
<svg class="abs" style="left:0;top:0" width="623" height="277" viewBox="381 204 623 277" font-family="Liberation Sans, sans-serif">
<defs>
<linearGradient id="teal" x1="0" y1="0" x2="1" y2="0"><stop offset="0" stop-color="#2fb3b0"/><stop offset="0.5" stop-color="#5fd0c8"/><stop offset="1" stop-color="#2aa7a8"/></linearGradient>
<linearGradient id="body" x1="0" y1="0" x2="0" y2="1"><stop offset="0" stop-color="#ffffff"/><stop offset="0.6" stop-color="#eef1f6"/><stop offset="1" stop-color="#b8c0cc"/></linearGradient>
</defs>
<text x="594" y="224.5" font-size="13" font-weight="bold" font-style="italic" fill="#111" textLength="139" lengthAdjust="spacingAndGlyphs">Tooth Paste &amp; Brushes</text>
<!-- top box -->
<polygon points="596,239.7 713.5,243.8 713.5,281 596,278" fill="url(#teal)"/>
<polygon points="713.5,243.8 721,244.2 718.5,280.5 713.5,281" fill="#1f8f94"/>
<polygon points="596.5,247 672.5,250 668,270 596.5,267.2" fill="#d6222c"/>
<ellipse cx="690" cy="259.5" rx="21" ry="13" fill="#e4e45a" opacity="0.8" transform="rotate(3 690 259.5)"/>
<ellipse cx="691" cy="260" rx="17" ry="10" fill="#3fb9b6" opacity="0.9" transform="rotate(3 690 259.5)"/>
<ellipse cx="703" cy="252" rx="8" ry="5" fill="#eef8fa" opacity="0.9"/>
<rect x="599" y="241.8" width="5" height="2.6" fill="#f2e020"/>
<path d="M608 243.2L690 246" stroke="#9fe6e0" stroke-width="1.2" opacity="0.8"/>
<path d="M608 265.6L660 267.6" stroke="#f4a0a0" stroke-width="1" opacity="0.9"/>
<g transform="rotate(2 630 257)"><text x="598.6" y="262.8" font-size="20.5" font-weight="bold" font-style="italic" fill="#fff" textLength="65.5" lengthAdjust="spacingAndGlyphs">Colgate</text>
<text x="673.5" y="265.6" font-size="16" font-weight="bold" font-style="italic" fill="#cfd04a" stroke="#2a5a8a" stroke-width="0.6" textLength="32.5" lengthAdjust="spacingAndGlyphs">Total</text>
<text x="669" y="271.8" font-size="5.5" font-weight="bold" font-style="italic" fill="#2a5aa8" textLength="33" lengthAdjust="spacingAndGlyphs">Advanced Fresh</text></g>
<rect x="714.6" y="252" width="2.6" height="22.5" fill="#c8505a" opacity="0.85"/>
<!-- bottom box -->
<polygon points="591,275.3 709,278.5 709,310.3 591,304.3" fill="url(#teal)"/>
<polygon points="709,278.5 719,279 717.2,311 709,310.3" fill="#1f8f94"/>
<polygon points="591,279.8 667.5,282.7 662,303.5 591,299.8" fill="#d6222c"/>
<ellipse cx="684" cy="292.5" rx="21" ry="13" fill="#e4e45a" opacity="0.8" transform="rotate(3 684 292.5)"/>
<ellipse cx="685" cy="293" rx="17" ry="10" fill="#3fb9b6" opacity="0.9" transform="rotate(3 684 292.5)"/>
<ellipse cx="697" cy="285" rx="8" ry="5" fill="#eef8fa" opacity="0.9"/>
<rect x="592" y="299.6" width="3" height="3" fill="#f2a020"/>
<path d="M600 277.2L690 280" stroke="#9fe6e0" stroke-width="1.2" opacity="0.8"/>
<path d="M603 298.4L655 300.6" stroke="#f4a0a0" stroke-width="1" opacity="0.9"/>
<g transform="rotate(2 625 290)"><text x="593.6" y="295.6" font-size="20.5" font-weight="bold" font-style="italic" fill="#fff" textLength="64" lengthAdjust="spacingAndGlyphs">Colgate</text>
<text x="667" y="298.6" font-size="16" font-weight="bold" font-style="italic" fill="#cfd04a" stroke="#2a5a8a" stroke-width="0.6" textLength="34" lengthAdjust="spacingAndGlyphs">Total</text>
<text x="663" y="305" font-size="5.5" font-weight="bold" font-style="italic" fill="#2a5aa8" textLength="33" lengthAdjust="spacingAndGlyphs">Advanced Fresh</text></g>
<rect x="710.5" y="284" width="4" height="24" fill="#c8505a" opacity="0.85"/>
<polygon points="588.7,275 595.4,269.5 595.4,280.5" fill="#8c8c60" opacity="0.75"/>
<polygon points="724,275 717.3,269.5 717.3,280.5" fill="#8c8c60" opacity="0.75"/>
<!-- toothbrushes -->
<polygon points="744.5,258 749,258 749.4,312 743.7,312" fill="#f0f0f2"/>
<rect x="737.5" y="240.3" width="9.6" height="15.3" rx="2" fill="#f28c20"/>
<path d="M739 243H746M739 246H746M739 249H746M739 252H746" stroke="#f8b060" stroke-width="0.8"/>
<polygon points="753,257 757.5,256 759.5,312 752.8,312" fill="#e87c1c"/>
<rect x="744.9" y="257.3" width="10.1" height="15.4" rx="2.2" fill="#3572c4"/>
<path d="M746 260.5H754M746 263.5H754M746 266.5H754M746 269.5H754" stroke="#7aa4e0" stroke-width="0.8"/>
<polygon points="755.5,246 759.8,245 768,312 760,312" fill="#4a94d6"/>
<g transform="rotate(-9 753 239)"><rect x="756" y="231.5" width="3.6" height="16" rx="1.6" fill="#6aa8dc"/><rect x="746.6" y="231.2" width="11" height="15.6" rx="2.2" fill="#f7d21e"/>
<path d="M748 234H756.5M748 237H756.5M748 240H756.5M748 243H756.5" stroke="#fbe878" stroke-width="0.8"/></g>
<polygon points="767,258 772.7,258 778.3,312 770.4,312" fill="#f6cb14"/>
<rect x="765.3" y="242" width="9" height="17.5" rx="3" fill="#f6cb14"/>
<rect x="773" y="244" width="5.3" height="14.5" rx="1.6" fill="#ee8a2a"/>
<polygon points="782,264 786.3,264 788.6,312 780.6,312" fill="#4a94d6"/>
<rect x="781.8" y="251.7" width="4" height="14" rx="1.8" fill="#7ab0e2"/>
<rect x="784" y="251.7" width="10.2" height="13" rx="2.6" fill="#f2f4fa" stroke="#d4dcea" stroke-width="0.6"/>
<polygon points="738.6,273 743.2,273 741.5,312 734.6,312" fill="#ee861e"/>
<rect x="739.5" y="260.5" width="3.6" height="14" rx="1.6" fill="#ee861e"/>
<rect x="731.2" y="259.6" width="9.8" height="14.8" rx="2.2" fill="#f7d21e"/>
<path d="M732.5 263H740M732.5 266H740M732.5 269H740M732.5 272H740" stroke="#fbe878" stroke-width="0.8"/>
<!-- table 1 -->
<g stroke="#555" stroke-width="0.8">
<path d="M596 320.3H750M596 348.3H750M596 376.5H750M631.7 320V376.5M727.6 320V376.5"/>
</g>
<g font-size="6.3" fill="#222">
<text x="626.7" y="328.6" text-anchor="end" font-weight="bold">11 09 17</text>
<text x="626.7" y="336.4" text-anchor="end" font-weight="bold">20</text>
<text x="626.7" y="344.2" text-anchor="end" font-weight="bold">21</text>
<text x="635.8" y="328.6" textLength="78.5" lengthAdjust="spacingAndGlyphs">Tooth paste Colgate 75 grm</text>
<text x="670.4" y="336.4">Colgate 198 grm</text>
<text x="670.4" y="344.2">200 grm</text>
<text x="733" y="336.4">Tub</text>
<text x="626.7" y="355.8" text-anchor="end" font-weight="bold">11 09 25</text>
<text x="626.7" y="364" text-anchor="end" font-weight="bold">26</text>
<text x="626.7" y="372.2" text-anchor="end" font-weight="bold">27</text>
<text x="635.8" y="355.8">Tooth brush bristle</text>
<text x="670.4" y="364">nylon</text>
<text x="670.4" y="372.2">nylon hard</text>
<text x="735" y="364">Pc.</text>
</g>
<text x="596.4" y="393" font-size="13" font-weight="bold" font-style="italic" fill="#111" textLength="121.5" lengthAdjust="spacingAndGlyphs">Electric Tooth Brush</text>
<!-- electric brush -->
<path d="M714 408.2L744 398.2" stroke="#e6eaf2" stroke-width="3.2" stroke-linecap="round"/>
<path d="M721.5 405.6L729 403.1" stroke="#4a84d4" stroke-width="3" stroke-dasharray="1.6 1.4"/>
<path d="M709.5 409.5L715.5 407.6" stroke="#2f62c0" stroke-width="6"/>
<g transform="rotate(-18 749.2 394.7)"><rect x="744.4" y="391.2" width="9.6" height="7" rx="2" fill="#28b4a4"/><rect x="747.4" y="390.6" width="3.6" height="8.2" rx="1" fill="#3a7ad8"/><rect x="745.2" y="393.6" width="8" height="2.2" fill="#e8f4f4" opacity="0.8"/></g>
<path d="M613.5 431.4L700.5 405.9Q709 404.6 711.8 410.2Q712.6 416.4 707 419.6L617 454.2Q610 455.6 607.4 449Q604 438 613.5 431.4Z" fill="url(#body)" stroke="#aab2c0" stroke-width="0.7"/>
<ellipse cx="610.4" cy="443.6" rx="4.6" ry="9.6" transform="rotate(-18 610.4 443.6)" fill="#c9cace" stroke="#9a9ca2" stroke-width="0.8"/>
<ellipse cx="610.2" cy="443.7" rx="2.4" ry="6" transform="rotate(-18 610.2 443.7)" fill="#dcdde0"/>
<path d="M618.5 431L682.2 411.6" stroke="#2a3a80" stroke-width="0.9" fill="none"/>
<path d="M621.4 432.7L663 420.5L665.2 430.6L626.4 444.8Z" fill="#4a8ad0"/>
<path d="M629.8 431.6L652.4 425L654 433.4L632.2 440.6Z" fill="#9db8ac" stroke="#1f3f86" stroke-width="0.9"/>
<path d="M655.6 424.2L661.6 422.4L663.4 430.2L657.4 432.4Z" fill="#9cc6f2"/>
<path d="M623.4 451.9L690.3 425.6" stroke="#2a3a80" stroke-width="1.2" fill="none"/>
<path d="M620.6 448.6L686 423.4" stroke="#7a86a8" stroke-width="0.7" fill="none"/>
<circle cx="679.2" cy="420.5" r="3.3" fill="#d9dfea" stroke="#98a4ba" stroke-width="0.7"/><circle cx="679" cy="420.6" r="1.5" fill="#24408e"/>
<circle cx="693.4" cy="415.4" r="4.6" fill="#7ea8e8" stroke="#c8d6ee" stroke-width="1.1"/>
<!-- stand pic -->
<rect x="762.3" y="391" width="23.4" height="64" fill="#e1e1e3"/>
<path d="M775 419.5H784.7V452H775Z" fill="#f6f6fa"/>
<path d="M771.2 394.5L772.2 412" stroke="#f8f8fc" stroke-width="2.2" stroke-linecap="round"/>
<path d="M770.8 411.5H773.4" stroke="#2aa898" stroke-width="1"/>
<path d="M769.6 414Q766.8 432 769 446L774 446Q775.4 432 773.4 414Z" fill="#3544b4"/>
<path d="M770.4 424Q769.4 434 770.6 444" stroke="#c8d0f0" stroke-width="1.2" fill="none"/>
<path d="M775 420.5L783.6 423V431L777 436V446" fill="none" stroke="#4a58c4" stroke-width="1.6"/>
<path d="M764.4 443.8H775.8V454.2H764.4Z" fill="#5462cc"/>
<!-- table 2 -->
<g stroke="#555" stroke-width="0.8"><path d="M607 461.3H742M607 474H742M644.5 461.3V474M715.5 461.3V474"/></g>
<g font-size="6.3" fill="#222">
<text x="616.4" y="470" font-weight="bold">11 09 28</text>
<text x="649.5" y="470" textLength="58" lengthAdjust="spacingAndGlyphs">Electric Tooth Brush</text>
<text x="724" y="470">Set</text>
</g>
</svg>

 </div>
 <!-- grid -->
 <div class="abs" id="grid">
  <div class="abs" style="left:0;top:0;width:69px;height:19px;background:#fff"></div>
  <div class="abs" style="left:69px;top:0;width:495px;height:19px;background:#bcdcf4"></div>
  <div class="abs" style="left:564px;top:0;width:59px;height:19px;background:#fff"></div>
  <div class="abs" style="left:0;top:20px;width:623px;height:21px;background:#eff6fd"></div>
  <div class="abs" style="left:0;top:42px;width:623px;height:21px;background:#fff"></div>
  <div class="abs" style="left:0;top:64px;width:623px;height:21px;background:#eff6fd"></div>
  <div class="abs" style="left:0;top:86px;width:623px;height:21px;background:#0078d7"></div>
  <div class="abs hl" style="top:19px"></div><div class="abs hl" style="top:41px"></div><div class="abs hl" style="top:63px"></div><div class="abs hl" style="top:85px"></div>
  <div class="abs" style="left:69px;top:20px;width:1px;height:87px;background:#a0a0a0"></div>
  <div class="abs" style="left:564px;top:20px;width:1px;height:87px;background:#a0a0a0"></div>
  <div class="abs dv gh" style="left:8px;letter-spacing:0.2px">Part No</div><div class="abs dv gh" style="left:77px">Name</div><div class="abs dv gh" style="left:571px">Units</div>
  <div class="abs pn" style="top:23.5px">110925</div><div class="abs dv gn" style="top:24.5px;letter-spacing:0.11px">TOOTH BRUSH HARD</div><div class="abs dv gu" style="top:24.5px">PCS</div>
  <div class="abs pn" style="top:45.5px">110926</div><div class="abs dv gn" style="top:46.5px;letter-spacing:0.11px">TOOTH BRUSH NYLON</div><div class="abs dv gu" style="top:46.5px">PCS</div>
  <div class="abs pn" style="top:67.5px">110927</div><div class="abs dv gn" style="top:68.5px;letter-spacing:0.11px">TOOTH BRUSH NYLON HARD</div><div class="abs dv gu" style="top:68.5px">PCS</div>
  <div class="abs pn" style="top:89.5px;color:#fff">110928</div><div class="abs dv gn" style="top:90.5px;color:#fff">ELECTRIC TOOTH BRUSH</div><div class="abs dv gu" style="top:90.5px;color:#fff">SET</div>
 </div>
 <!-- status -->
 <div class="abs" style="left:376px;top:767px;width:630px;height:1px;background:#e6e6e6"></div>
 <div class="abs dv" style="left:700px;width:291px;text-align:right;top:773px;font-size:11.8px;line-height:16px;color:#2408d8">Made by Yury Komar (Sea-Soft.ru)</div>
 <svg class="abs" style="left:994px;top:777px" width="12" height="12"><g fill="#a4a4a4"><rect x="9" y="1" width="2" height="2"/><rect x="5" y="5" width="2" height="2"/><rect x="9" y="5" width="2" height="2"/><rect x="1" y="9" width="2" height="2"/><rect x="5" y="9" width="2" height="2"/><rect x="9" y="9" width="2" height="2"/></g></svg>

</div>
</body></html>
